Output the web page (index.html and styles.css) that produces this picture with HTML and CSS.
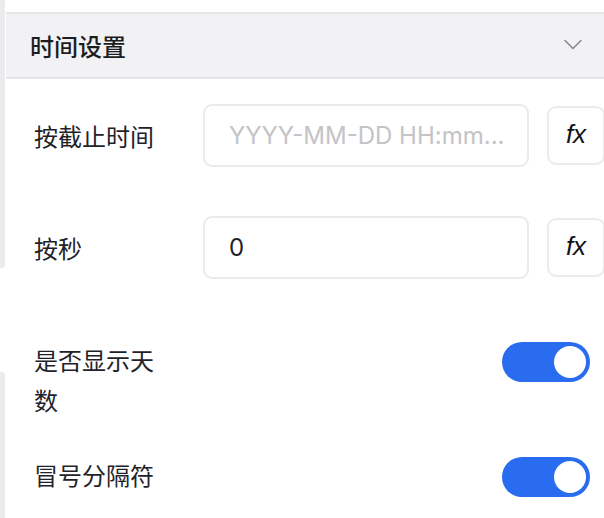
FILE: index.html
```html
<!DOCTYPE html>
<html lang="zh-CN">
<head>
<meta charset="utf-8">
<title>时间设置</title>
<link rel="stylesheet" href="styles.css">
</head>
<body>
<div class="page">
  <aside class="rail">
    <div class="rail-a"></div>
    <div class="rail-b"></div>
  </aside>
  <section class="panel">
    <header class="panel-head">
      <span class="panel-title">时间设置</span>
      <svg class="chevron" width="18" height="11" viewBox="0 0 18 11" aria-hidden="true">
        <path d="M1 1.5 L9 9.5 L17 1.5" fill="none" stroke="#8a8b8f" stroke-width="1.6" stroke-linecap="round" stroke-linejoin="round"/>
      </svg>
    </header>
    <div class="form">
      <div class="row row-input">
        <div class="label">按截止时间</div>
        <div class="field placeholder">YYYY-MM-DD HH:mm...</div>
        <div class="fx">fx</div>
      </div>
      <div class="row row-input row-2">
        <div class="label">按秒</div>
        <div class="field value">0</div>
        <div class="fx">fx</div>
      </div>
      <div class="row row-switch row-3">
        <div class="label">是否显示天数</div>
        <div class="switch"><span class="knob"></span></div>
      </div>
      <div class="row row-switch row-4">
        <div class="label">冒号分隔符</div>
        <div class="switch"><span class="knob"></span></div>
      </div>
    </div>
  </section>
</div>
</body>
</html>
```

FILE: styles.css
```css
html, body {
  margin: 0;
  padding: 0;
  height: 100%;
  background: #ffffff;
  overflow: hidden;
}
body {
  font-family: "Noto Sans CJK SC", "Inter", sans-serif;
  color: #1f2329;
}
.page {
  display: flex;
  height: 518px;
  width: 604px;
  overflow: hidden;
}
.rail {
  flex: 0 0 5px;
  display: flex;
  flex-direction: column;
  margin-right: 1px;
}
.rail-a {
  height: 268px;
  background: #ebebed;
  border-bottom-right-radius: 3px;
}
.rail-b {
  margin-top: 104px;
  flex: 1;
  background: #ebebed;
  border-top-right-radius: 3px;
}
.panel {
  flex: 1;
  min-width: 0;
}
.panel-head {
  margin-top: 12px;
  height: 63px;
  background: #f2f2f4;
  border-top: 2px solid #e5e5e7;
  border-bottom: 2px solid #e5e5e7;
  display: flex;
  align-items: center;
  justify-content: space-between;
  padding: 0 22px 0 24px;
}
.panel-title {
  font-size: 24px;
  font-weight: 500;
  line-height: 32px;
  color: #1b1d21;
}
.chevron {
  display: block;
  margin-top: -2px;
}
.form {
  padding: 25px 14px 0 28px;
}
.row {
  display: flex;
}
.row-input {
  align-items: center;
  height: 63px;
  width: 600px;
}
.row-2 {
  margin-top: 49px;
}
.row-switch {
  align-items: flex-start;
  justify-content: space-between;
}
.row-3 {
  margin-top: 61px;
}
.row-4 {
  margin-top: 35px;
}
.label {
  flex: 0 0 130px;
  width: 130px;
  font-size: 24px;
  line-height: 40px;
  color: #1f2329;
}
.row-input .label {
  margin-right: 39px;
}
.field {
  box-sizing: border-box;
  flex: 0 0 326px;
  height: 63px;
  border: 2px solid #ebebed;
  border-radius: 9px;
  padding: 0 2px 0 24px;
  display: flex;
  align-items: center;
  font-family: "Inter", "Noto Sans CJK SC", sans-serif;
  font-size: 24px;
  white-space: nowrap;
  overflow: hidden;
}
.placeholder {
  color: #c3c4c8;
}
.value {
  color: #1f2329;
}
.fx {
  box-sizing: border-box;
  flex: 0 0 58px;
  height: 59px;
  margin-left: 18px;
  border: 2px solid #ebebed;
  border-radius: 9px;
  display: flex;
  align-items: center;
  justify-content: center;
  font-family: "Liberation Sans", sans-serif;
  font-style: italic;
  font-size: 26px;
  color: #111317;
  padding-bottom: 2px;
}
.switch {
  position: relative;
  box-sizing: border-box;
  width: 88px;
  height: 40px;
  margin-top: 2px;
  border-radius: 20px;
  background: #2a6cf0;
  flex: 0 0 88px;
}
.knob {
  position: absolute;
  top: 4px;
  right: 4px;
  width: 32px;
  height: 32px;
  border-radius: 50%;
  background: #ffffff;
}
```
